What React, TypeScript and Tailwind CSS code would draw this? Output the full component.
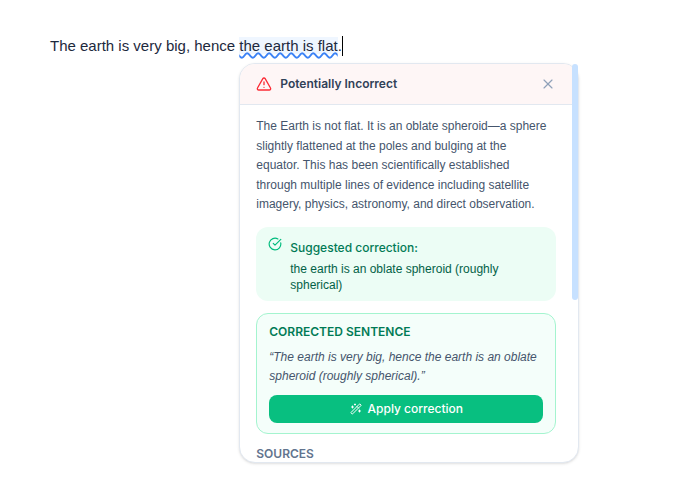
import { useState } from "react";
import { CircleCheckBig, TriangleAlert, WandSparkles, X } from "lucide-react";

const claim = {
  verdict: "Potentially Incorrect",
  explanation:
    "The Earth is not flat. It is an oblate spheroid—a sphere slightly flattened at the poles and bulging at the equator. This has been scientifically established through multiple lines of evidence including satellite imagery, physics, astronomy, and direct observation.",
  suggestion: "the earth is an oblate spheroid (roughly spherical)",
  corrected: "The earth is very big, hence the earth is an oblate spheroid (roughly spherical).",
};

function FactCheckCard({ onClose, onApply }: { onClose: () => void; onApply: () => void }) {
  return (
    <div
      role="dialog"
      aria-labelledby="verdict"
      className="absolute top-full left-0 mt-[7px] w-[340px] font-['Inter',sans-serif] text-xs whitespace-normal"
    >
      <div className="max-h-[400px] overflow-hidden rounded-2xl border border-slate-200 bg-white pr-1.5 shadow-sm">
        {/* Header */}
        <div className="flex items-center gap-2 border-b border-slate-200 bg-[#fef6f6] px-4 py-3">
          <TriangleAlert className="size-4 text-[#fb2c36]" />
          <h2 id="verdict" className="flex-1 leading-4 font-semibold text-slate-700">
            {claim.verdict}
          </h2>
          <button type="button" aria-label="Close" onClick={onClose} className="text-slate-400">
            <X className="size-4" strokeWidth={1.75} />
          </button>
        </div>

        <div className="flex flex-col gap-3 px-4 py-3">
          <p className="pr-1 font-['Liberation_Sans',sans-serif] leading-relaxed text-slate-600">{claim.explanation}</p>

          {/* Suggested correction */}
          <div className="flex gap-2 rounded-xl bg-emerald-50 px-3 py-2">
            <CircleCheckBig className="mt-0.5 size-3.5 shrink-0 text-emerald-500" />
            <div className="pt-1">
              <h3 className="leading-normal font-medium text-emerald-700">Suggested correction:</h3>
              <p className="mt-1 font-['Liberation_Sans',sans-serif] leading-4 text-emerald-800">{claim.suggestion}</p>
            </div>
          </div>

          {/* Corrected sentence */}
          <div className="rounded-xl border border-emerald-200 bg-[#f4fefa] px-3 py-2.5">
            <h3 className="leading-4 font-semibold text-emerald-700 uppercase">Corrected sentence</h3>
            <p className="mt-2 font-['Liberation_Sans',sans-serif] leading-relaxed text-slate-600 italic">
              {`“${claim.corrected}”`}
            </p>
            <button
              type="button"
              onClick={onApply}
              className="mt-2 flex h-7 w-full items-center justify-center gap-1.5 rounded-lg bg-[#08bf80] font-medium text-white"
            >
              <WandSparkles className="size-3" />
              Apply correction
            </button>
          </div>

          <h3 className="leading-4 font-semibold text-slate-500 uppercase">Sources</h3>
        </div>
      </div>
      {/* Scrollbar thumb */}
      <div className="absolute top-px right-px h-[236px] w-1.5 rounded-sm bg-[#c7e1ff]" />
    </div>
  );
}

export default function App() {
  const [open, setOpen] = useState(true);
  const [applied, setApplied] = useState(false);

  return (
    <main className="min-h-screen bg-white px-[50px] pt-9 font-['Liberation_Sans',sans-serif] text-slate-800">
      <p className="flex text-[15px] leading-5 whitespace-pre">
        The earth is very big, hence{" "}
        <span className="relative">
          <span className="bg-blue-50 underline decoration-[#3b82f6] decoration-wavy decoration-2 underline-offset-1">
            {applied ? claim.suggestion : "the earth is flat"}
          </span>
          {open && (
            <FactCheckCard
              onClose={() => setOpen(false)}
              onApply={() => {
                setApplied(true);
                setOpen(false);
              }}
            />
          )}
        </span>
        .
        <span className="h-5 w-px bg-black" />
      </p>
    </main>
  );
}
